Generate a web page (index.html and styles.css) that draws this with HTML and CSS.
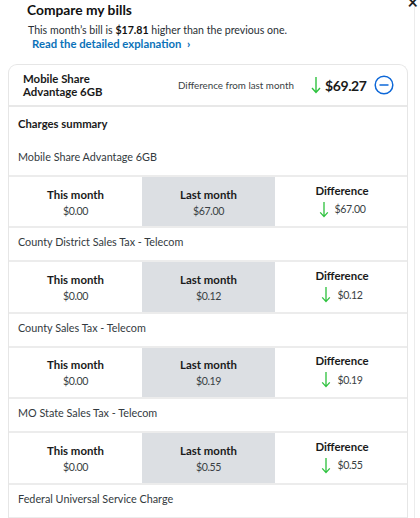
FILE: index.html
```html
<!DOCTYPE html>
<html>
<head>
<meta charset="utf-8">
<link rel="stylesheet" href="styles.css">
</head>
<body>
<div class="page">
  <span class="close">×</span>
  <div class="intro">
    <h1 class="title">Compare my bills</h1>
    <p class="sub">This month’s bill is <b>$17.81</b> higher than the previous one.</p>
    <a class="link">Read the detailed explanation <span class="chev">›</span></a>
  </div>
  <div class="card">
    <div class="card-head">
      <div class="plan">Mobile Share<br>Advantage 6GB</div>
      <div class="diff-label">Difference from last month</div>
      <div class="diff-amt">
        <svg class="arrow big" viewBox="0 0 10 18" width="10" height="18"><path d="M5 1V16M1 12L5 16.5L9 12" fill="none" stroke="#2fc23f" stroke-width="1.4"/></svg>
        <span>$69.27</span>
      </div>
      <svg class="minus" viewBox="0 0 20 20" width="20" height="20"><circle cx="10" cy="10" r="8.8" fill="none" stroke="#0e68d8" stroke-width="1.5"/><path d="M5.5 10H14.5" stroke="#0e68d8" stroke-width="1.5"/></svg>
    </div>
    <div class="summary">Charges summary</div>

    <div class="label">Mobile Share Advantage 6GB</div>
    <div class="grid">
      <div class="cell"><div class="h">This month</div><div class="v">$0.00</div></div>
      <div class="cell last"><div class="h">Last month</div><div class="v">$67.00</div></div>
      <div class="cell diff"><div class="h">Difference</div><div class="v"><svg class="arrow" viewBox="0 0 10 18" width="10" height="17"><path d="M5 1V16M1 12L5 16.5L9 12" fill="none" stroke="#2fc23f" stroke-width="1.4"/></svg>$67.00</div></div>
    </div>

    <div class="label">County District Sales Tax - Telecom</div>
    <div class="grid">
      <div class="cell"><div class="h">This month</div><div class="v">$0.00</div></div>
      <div class="cell last"><div class="h">Last month</div><div class="v">$0.12</div></div>
      <div class="cell diff"><div class="h">Difference</div><div class="v"><svg class="arrow" viewBox="0 0 10 18" width="10" height="17"><path d="M5 1V16M1 12L5 16.5L9 12" fill="none" stroke="#2fc23f" stroke-width="1.4"/></svg>$0.12</div></div>
    </div>

    <div class="label">County Sales Tax - Telecom</div>
    <div class="grid">
      <div class="cell"><div class="h">This month</div><div class="v">$0.00</div></div>
      <div class="cell last"><div class="h">Last month</div><div class="v">$0.19</div></div>
      <div class="cell diff"><div class="h">Difference</div><div class="v"><svg class="arrow" viewBox="0 0 10 18" width="10" height="17"><path d="M5 1V16M1 12L5 16.5L9 12" fill="none" stroke="#2fc23f" stroke-width="1.4"/></svg>$0.19</div></div>
    </div>

    <div class="label">MO State Sales Tax - Telecom</div>
    <div class="grid">
      <div class="cell"><div class="h">This month</div><div class="v">$0.00</div></div>
      <div class="cell last"><div class="h">Last month</div><div class="v">$0.55</div></div>
      <div class="cell diff"><div class="h">Difference</div><div class="v"><svg class="arrow" viewBox="0 0 10 18" width="10" height="17"><path d="M5 1V16M1 12L5 16.5L9 12" fill="none" stroke="#2fc23f" stroke-width="1.4"/></svg>$0.55</div></div>
    </div>

    <div class="label">Federal Universal Service Charge</div>
    <div class="grid">
      <div class="cell"><div class="h">This month</div><div class="v">$0.00</div></div>
      <div class="cell last"><div class="h">Last month</div><div class="v">$0.00</div></div>
      <div class="cell diff"><div class="h">Difference</div><div class="v">$0.00</div></div>
    </div>
  </div>
</div>
</body>
</html>
```
FILE: styles.css
```css
* { box-sizing: border-box; }
html, body { margin: 0; padding: 0; background: #fff; }
body {
  font-family: Lato, "Liberation Sans", sans-serif;
  color: #1d2329;
  width: 420px;
  height: 518px;
  overflow: hidden;
}
.page {
  position: relative;
  padding: 0 12px 0 8px;
  border-right: 1px solid #ececec;
  width: 415px;
  height: 518px;
}
.close {
  position: absolute;
  right: -4px;
  top: -9px;
  font-size: 18px;
  font-weight: 700;
  color: #222;
}
.intro { padding: 0 0 0 19px; }
.title {
  margin: 0;
  font-size: 13.8px;
  font-weight: 700;
  line-height: 18px;
  padding-top: 1px;
  color: #111;
}
.sub {
  margin: 3px 0 0 1px;
  font-size: 10.6px;
  line-height: 16px;
  color: #2a2f35;
}
.sub b { font-weight: 700; color: #111; }
.link {
  display: block;
  margin: -2px 0 0 5px;
  font-size: 11.3px;
  line-height: 15px;
  font-weight: 700;
  color: #0b72b9;
}
.chev { font-weight: 900; margin-left: 3px; }
.card {
  margin-top: 13px;
  border: 1px solid #e6e6e6;
  border-bottom: none;
  border-radius: 9px 9px 0 0;
  width: 400px;
  overflow: hidden;
}
.card-head {
  display: flex;
  align-items: center;
  height: 42px;
  padding: 0 0 0 14px;
  border-bottom: 2px solid #e8e8e8;
}
.plan {
  font-size: 11.4px;
  font-weight: 700;
  line-height: 13px;
  width: 155px;
  color: #1a1a1a;
}
.diff-label {
  font-size: 9.8px;
  color: #3a3f44;
  width: 133px;
}
.diff-amt {
  display: flex;
  align-items: center;
  font-size: 14px;
  letter-spacing: -0.4px;
  font-weight: 700;
  color: #1a1a1a;
  width: 62px;
}
.diff-amt .arrow { margin-right: 4px; }
.minus { margin-left: 1px; }
.summary {
  font-size: 11.3px;
  font-weight: 700;
  padding: 10px 0 0 9px;
  height: 36px;
  color: #1a1a1a;
}
.label {
  font-size: 10.8px;
  color: #333a40;
  height: 32px;
  padding: 7px 0 0 9px;
}
.grid {
  display: grid;
  grid-template-columns: 133px 133px 134px;
  height: 53.4px;
  border-top: 2px solid #ececec;
  border-bottom: 2px solid #ececec;
}
.cell {
  display: flex;
  flex-direction: column;
  align-items: center;
  justify-content: center;
  padding-top: 2px;
}
.cell.last { background: #dcdfe3; }
.cell.diff { padding-top: 0; padding-bottom: 3px; }
.h {
  font-size: 11.4px;
  font-weight: 700;
  color: #1a1a1a;
  line-height: 16px;
}
.v {
  font-size: 10.6px;
  letter-spacing: -0.4px;
  color: #3a3f44;
  line-height: 16px;
  display: flex;
  align-items: center;
}
.diff .h { margin-bottom: 2px; }
.diff .v .arrow { margin-right: 6px; }
```
